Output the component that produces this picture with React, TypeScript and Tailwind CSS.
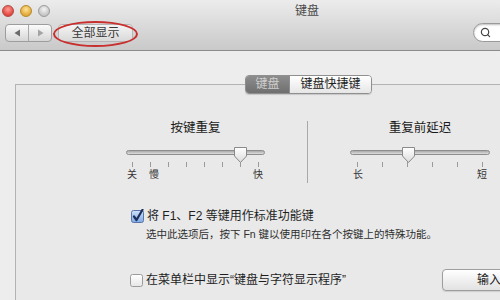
import { Search } from "lucide-react";

const font = { fontFamily: '"Liberation Sans", "Noto Sans CJK SC", sans-serif' };

function Thumb() {
  return (
    <svg width="15" height="18" viewBox="0 0 15 18">
      <defs>
        <linearGradient id="tg" x1="0" y1="0" x2="0" y2="1">
          <stop offset="0" stopColor="#ffffff" />
          <stop offset="1" stopColor="#dcdcdc" />
        </linearGradient>
      </defs>
      <path d="M1.5 1.5 H13.5 V10 L7.5 16.5 L1.5 10 Z" fill="url(#tg)" stroke="#8a8a8a" strokeWidth="1" strokeLinejoin="round" />
    </svg>
  );
}

function Slider({
  title,
  ticks,
  inset,
  thumbLeft,
  left,
  right,
  second,
  width,
}: {
  title: string;
  ticks: number;
  inset: string;
  thumbLeft: string;
  left: string;
  right: string;
  second?: string;
  width: string;
}) {
  return (
    <div className={`flex shrink-0 flex-col ${width}`}>
      <div className="h-[16px] text-center text-[12.5px] leading-[16px] text-[#1a1a1a]">{title}</div>
      <div className="relative mt-[9px] h-[17px]">
        <div className="mt-[5px] h-[5px] rounded-full border border-[#8d8d8d] bg-gradient-to-b from-[#a9a9a9] to-[#dedede]" />
        <div className={`absolute top-[1px] ${thumbLeft}`}>
          <Thumb />
        </div>
      </div>
      <div className={`flex h-[5px] justify-between ${inset}`}>
        {Array.from({ length: ticks }).map((_, i) => (
          <div key={i} className="h-[5px] w-px bg-[#9a9a9a]" />
        ))}
      </div>
      <div className="mt-[2px] flex text-[10px] leading-[12px] text-[#333]">
        <span className={second ? "ml-[1px]" : "ml-[3px]"}>{left}</span>
        {second && <span className="ml-[12px]">{second}</span>}
        <span className={second ? "ml-auto mr-[2px]" : "ml-auto mr-[3px]"}>{right}</span>
      </div>
    </div>
  );
}

function CheckBox({ checked }: { checked?: boolean }) {
  return (
    <svg width="13" height="14" viewBox="0 0 13 14" className="shrink-0">
      <defs>
        <linearGradient id={checked ? "cb1" : "cb0"} x1="0" y1="0" x2="0" y2="1">
          <stop offset="0" stopColor={checked ? "#cfe2fb" : "#ffffff"} />
          <stop offset="1" stopColor={checked ? "#7fa9e3" : "#e6e6e6"} />
        </linearGradient>
      </defs>
      <rect x="0.5" y="1.5" width="12" height="12" rx="2" fill={`url(#${checked ? "cb1" : "cb0"})`} stroke={checked ? "#5a76a8" : "#9b9b9b"} />
      {checked && (
        <path d="M3 7.5 L5.5 11 L11.5 0.8" fill="none" stroke="#1d2f5c" strokeWidth="2.2" strokeLinecap="round" strokeLinejoin="round" />
      )}
    </svg>
  );
}

export default function App() {
  return (
    <div className="relative h-[300px] w-[500px] overflow-hidden bg-[#ededed]" style={font}>
      {/* title bar + toolbar */}
      <div className="h-[51px] border-b border-[#8c8c8c] bg-gradient-to-b from-[#ececec] to-[#c9c9c9]">
        <div className="flex h-[21px] items-center pl-[2px]">
          <div className="flex shrink-0 gap-[6px]">
            <div className="h-[12px] w-[12px] rounded-full border border-[#b04a46] bg-[radial-gradient(circle_at_50%_35%,#ff9c94,#e0443c_70%)]" />
            <div className="h-[12px] w-[12px] rounded-full border border-[#b48a2c] bg-[radial-gradient(circle_at_50%_35%,#ffe39a,#e2a634_70%)]" />
            <div className="h-[12px] w-[12px] rounded-full border border-[#9a9a9a] bg-[radial-gradient(circle_at_50%_35%,#f4f4f4,#c4c4c4_70%)]" />
          </div>
          <span className="ml-[245px] shrink-0 text-[12px] leading-[14px] text-[#4a4a4a]">键盘</span>
        </div>
        <div className="mt-[2px] flex h-[19px] items-center">
          <div className="ml-[5px] flex h-[18px] w-[47px] shrink-0 overflow-hidden rounded-[4px] border border-[#9d9d9d] bg-gradient-to-b from-[#fbfbfb] to-[#d6d6d6]">
            <div className="flex flex-1 items-center justify-center border-r border-[#a8a8a8]">
              <svg width="7" height="8" viewBox="0 0 7 8"><path d="M6 0.5 V7.5 L0.5 4 Z" fill="#6c6c6c" /></svg>
            </div>
            <div className="flex flex-1 items-center justify-center">
              <svg width="7" height="8" viewBox="0 0 7 8"><path d="M1 0.5 V7.5 L6.5 4 Z" fill="#a4a4a4" /></svg>
            </div>
          </div>
          <div className="ml-[6px] flex h-[18px] w-[75px] shrink-0 items-center justify-center rounded-[4px] border border-[#b5b5b5] bg-gradient-to-b from-[#f4f4f4] to-[#d9d9d9] text-[12px] text-[#3a3a3a]">
            全部显示
          </div>
          <div className="ml-[340px] flex h-[19px] w-[60px] shrink-0 items-center rounded-full border border-[#9a9a9a] bg-white pl-[6px] shadow-[inset_0_1px_2px_rgba(0,0,0,0.25)]">
            <Search size={11} strokeWidth={2.6} className="text-[#444]" />
          </div>
        </div>
      </div>

      {/* red annotation ellipse */}
      <div className="absolute left-[53px] top-[21px] h-[26px] w-[85px] rounded-[50%] border-2 border-[#c8302f]" />

      {/* content */}
      <div className="h-[249px] pl-[15px] pt-[33px]">
        <div className="h-[240px] w-[520px] border-l border-t border-[#b3b3b3] bg-[#e9e9e9]">
          <div className="-mt-[10px] ml-[229px] flex h-[19px] w-fit overflow-hidden rounded-[4px] border border-[#8f8f8f] text-[12px] leading-[17px] shadow-[0_1px_1px_rgba(0,0,0,0.15)]">
            <div className="w-[43px] bg-gradient-to-b from-[#8d8d8d] to-[#6f6f6f] text-center text-[#cfcfcf]">键盘</div>
            <div className="w-[82px] border-l border-[#8f8f8f] bg-gradient-to-b from-[#ffffff] to-[#e6e6e6] text-center text-[#222]">键盘快捷键</div>
          </div>

          <div className="ml-[110px] mt-[26px] flex">
            <Slider title="按键重复" ticks={8} inset="px-[6px]" thumbLeft="left-[107px]" left="关" second="慢" right="快" width="w-[139px]" />
            <div className="ml-[42px] mt-[1px] h-[62px] w-px shrink-0 bg-[#a9a9a9]" />
            <Slider title="重复前延迟" ticks={6} inset="px-[7px]" thumbLeft="left-[51px]" left="长" right="短" width="ml-[42px] w-[140px]" />
          </div>

          <div className="ml-[115px] mt-[25px] flex h-[16px] items-center gap-[3px] text-[12px] text-[#1e1e1e]">
            <CheckBox checked />
            <span>将 F1、F2 等键用作标准功能键</span>
          </div>
          <div className="ml-[130px] mt-[4px] text-[10.5px] leading-[12px] text-[#2e2e2e]">
            选中此选项后，按下 Fn 键以使用印在各个按键上的特殊功能。
          </div>

          <div className="ml-[114px] mt-[32px] flex h-[16px] items-center text-[12px] text-[#1e1e1e]">
            <CheckBox />
            <span className="ml-[3px] w-[296px] shrink-0">在菜单栏中显示“键盘与字符显示程序”</span>
            <div className="flex h-[22px] w-[100px] shrink-0 items-center rounded-[4px] border border-[#9e9e9e] bg-gradient-to-b from-[#ffffff] to-[#e2e2e2] pl-[34px] text-[12px] text-[#222] shadow-[0_1px_1px_rgba(0,0,0,0.12)]">
              输入
            </div>
          </div>
        </div>
      </div>
    </div>
  );
}
